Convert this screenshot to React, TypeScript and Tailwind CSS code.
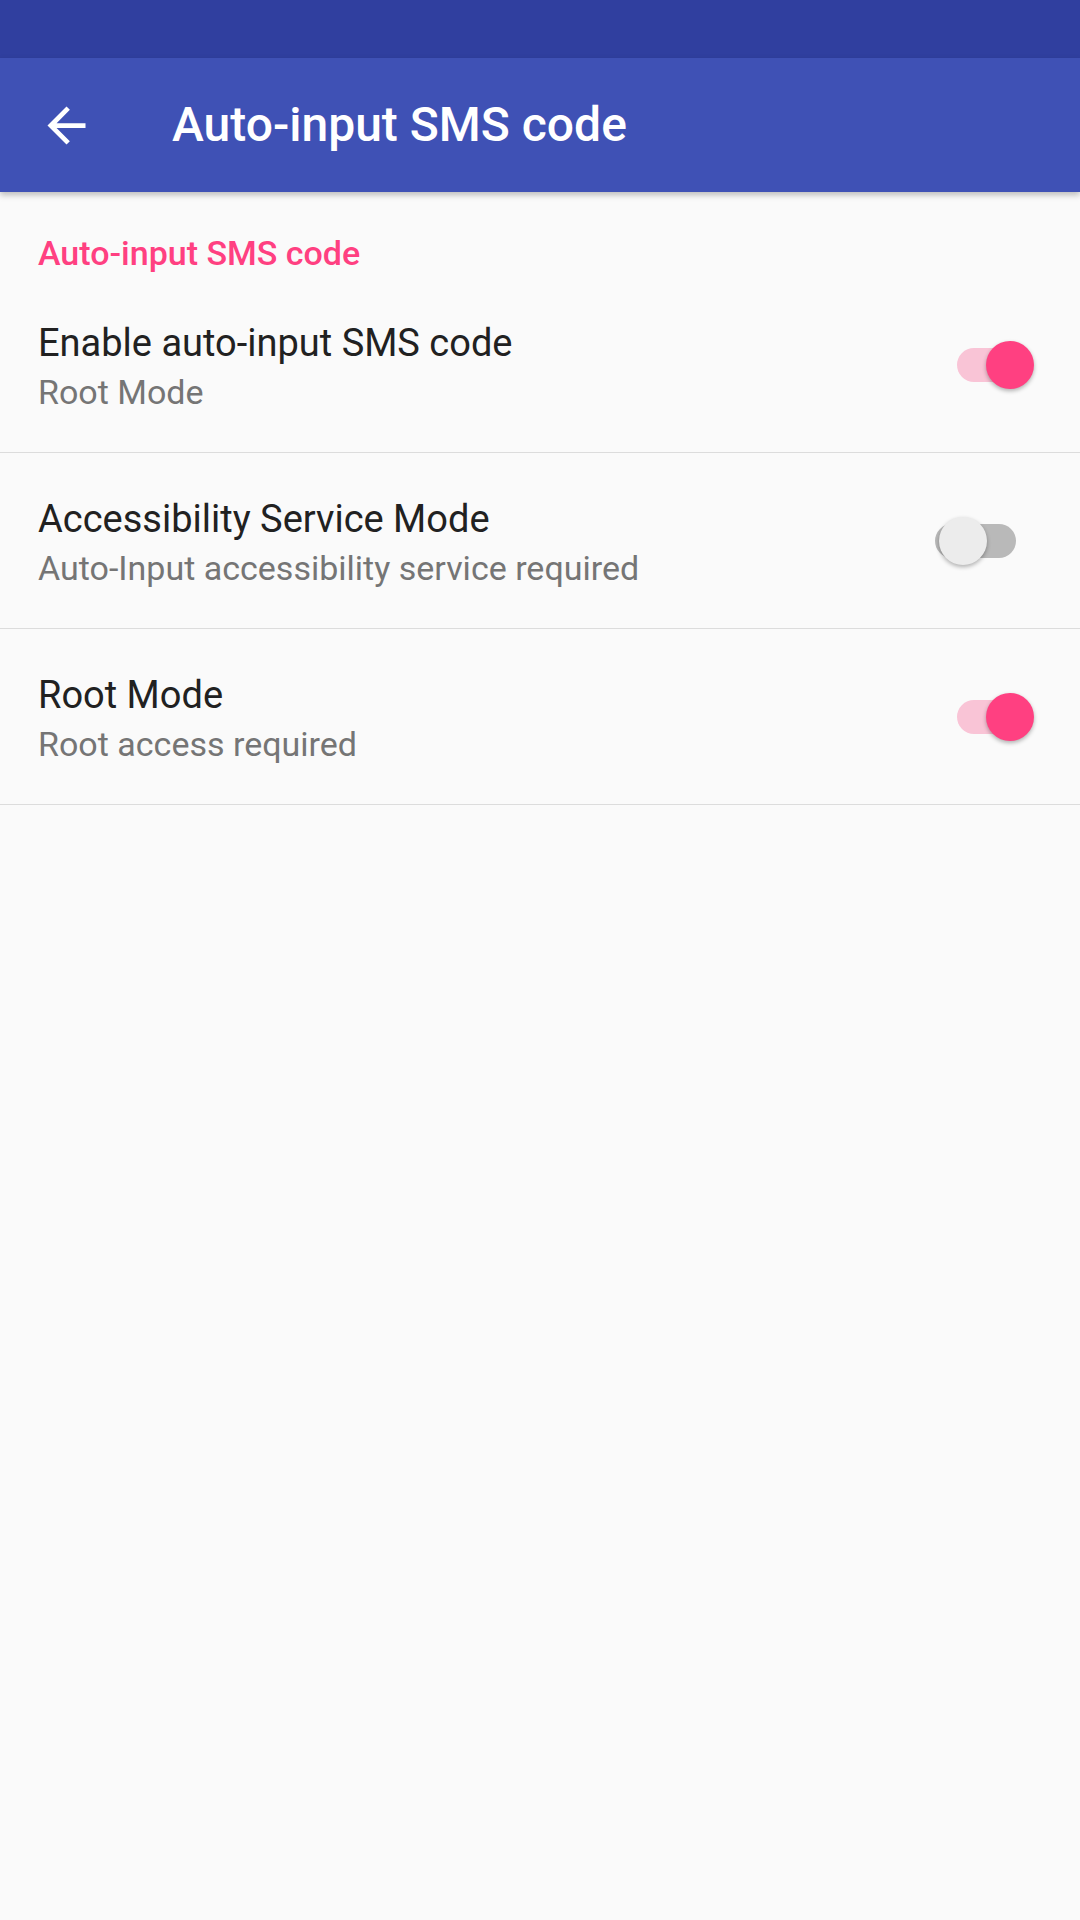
import React from "react";

function Switch({ on }: { on: boolean }) {
  return (
    <div className="flex w-[110px] h-[60px] shrink-0 items-center">
      {on ? (
        <>
          <div className="ml-[27px] w-[74px] h-[34px] rounded-full bg-[#f9c4d6]" />
          <div className="-ml-[45px] w-[48px] h-[48px] rounded-full bg-[#ff4081] shadow-[0_2px_4px_rgba(0,0,0,0.3)]" />
        </>
      ) : (
        <>
          <div className="ml-[9px] w-[48px] h-[48px] rounded-full bg-[#ececec] shadow-[0_2px_4px_rgba(0,0,0,0.3)] relative z-10" />
          <div className="-ml-[52px] w-[81px] h-[34px] rounded-full bg-[#b9b9b9]" />
        </>
      )}
    </div>
  );
}

function Row({ title, summary, on }: { title: string; summary: string; on: boolean }) {
  return (
    <div className="flex h-[176px] items-center border-b border-[#dcdcdc] pl-[38px] pr-[40px]">
      <div className="flex-1 self-start pt-[42px]">
        <div className="text-[38px] leading-[48px] text-[#212121]">{title}</div>
        <div className="text-[34px] leading-[50px] text-[#757575]">{summary}</div>
      </div>
      <Switch on={on} />
    </div>
  );
}

export default function App() {
  return (
    <div className="w-[1080px] h-[1920px] bg-[#fafafa] overflow-hidden" style={{ fontFamily: "Roboto, 'Noto Sans', sans-serif" }}>
      <div className="h-[58px] bg-[#303f9f]" />
      <div className="relative z-10 flex h-[134px] items-center bg-[#3f51b5] shadow-[0_3px_6px_rgba(0,0,0,0.25)]">
        <div className="ml-[38px] w-[57px] h-[57px]">
          <svg viewBox="0 0 24 24" width="57" height="57" fill="#ffffff">
            <path d="M20 11H7.83l5.59-5.59L12 4l-8 8 8 8 1.41-1.41L7.83 13H20v-2z" />
          </svg>
        </div>
        <div className="ml-[77px] text-[48px] font-medium leading-[56px] text-white">Auto-input SMS code</div>
      </div>
      <div className="h-[85px] pl-[38px] pt-[44px]">
        <div className="text-[34px] font-medium leading-[34px] text-[#ff4081]">Auto-input SMS code</div>
      </div>
      <Row title="Enable auto-input SMS code" summary="Root Mode" on={true} />
      <Row title="Accessibility Service Mode" summary="Auto-Input accessibility service required" on={false} />
      <Row title="Root Mode" summary="Root access required" on={true} />
    </div>
  );
}
